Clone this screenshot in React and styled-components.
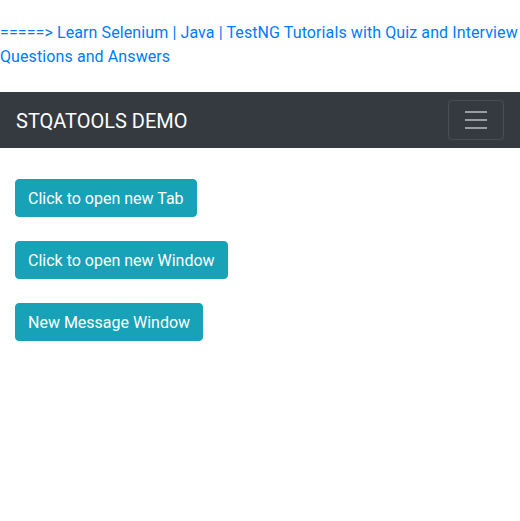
import React from "react";
import styled, { createGlobalStyle } from "styled-components";

const Global = createGlobalStyle`
  html, body { margin: 0; padding: 0; background: #fff; }
  body {
    font-family: Roboto, "Open Sans", sans-serif;
    font-size: 16px;
    line-height: 1.5;
    color: #212529;
  }
`;

const TopLink = styled.a`
  display: block;
  margin: 21px 0 23px;
  color: #007bff;
  text-decoration: none;
  font-size: 16px;
  line-height: 24px;
  letter-spacing: 0.1px;
`;

const Navbar = styled.nav`
  display: flex;
  align-items: center;
  justify-content: space-between;
  background: #343a40;
  padding: 8px 16px;
`;

const Brand = styled.a`
  color: #fff;
  font-size: 20px;
  line-height: 30px;
  padding: 6px 0 4px;
  text-decoration: none;
`;

const Toggler = styled.button`
  display: flex;
  align-items: center;
  justify-content: center;
  width: 56px;
  height: 40px;
  padding: 4px 12px;
  background: transparent;
  border: 1px solid rgba(255, 255, 255, 0.1);
  border-radius: 4px;
`;

const Content = styled.div`
  padding: 31px 15px 0;
  display: flex;
  flex-direction: column;
  align-items: flex-start;
  gap: 24px;
`;

const Button = styled.button`
  font-family: inherit;
  font-size: 16px;
  line-height: 24px;
  padding: 7px 12px 5px;
  color: #fff;
  background: #17a2b8;
  border: 1px solid #17a2b8;
  border-radius: 4px;
  cursor: pointer;
`;

export default function App() {
  return (
    <>
      <Global />
      <TopLink href="#">
        =====&gt; Learn Selenium | Java | TestNG Tutorials with Quiz and Interview Questions and Answers
      </TopLink>
      <Navbar>
        <Brand href="#">STQATOOLS DEMO</Brand>
        <Toggler aria-label="Toggle navigation">
          <svg width="30" height="30" viewBox="0 0 30 30">
            <path
              d="M4 7h22M4 15h22M4 23h22"
              stroke="rgba(255,255,255,0.5)"
              strokeWidth="2"
              strokeMiterlimit="10"
            />
          </svg>
        </Toggler>
      </Navbar>
      <Content>
        <Button>Click to open new Tab</Button>
        <Button>Click to open new Window</Button>
        <Button>New Message Window</Button>
      </Content>
    </>
  );
}
